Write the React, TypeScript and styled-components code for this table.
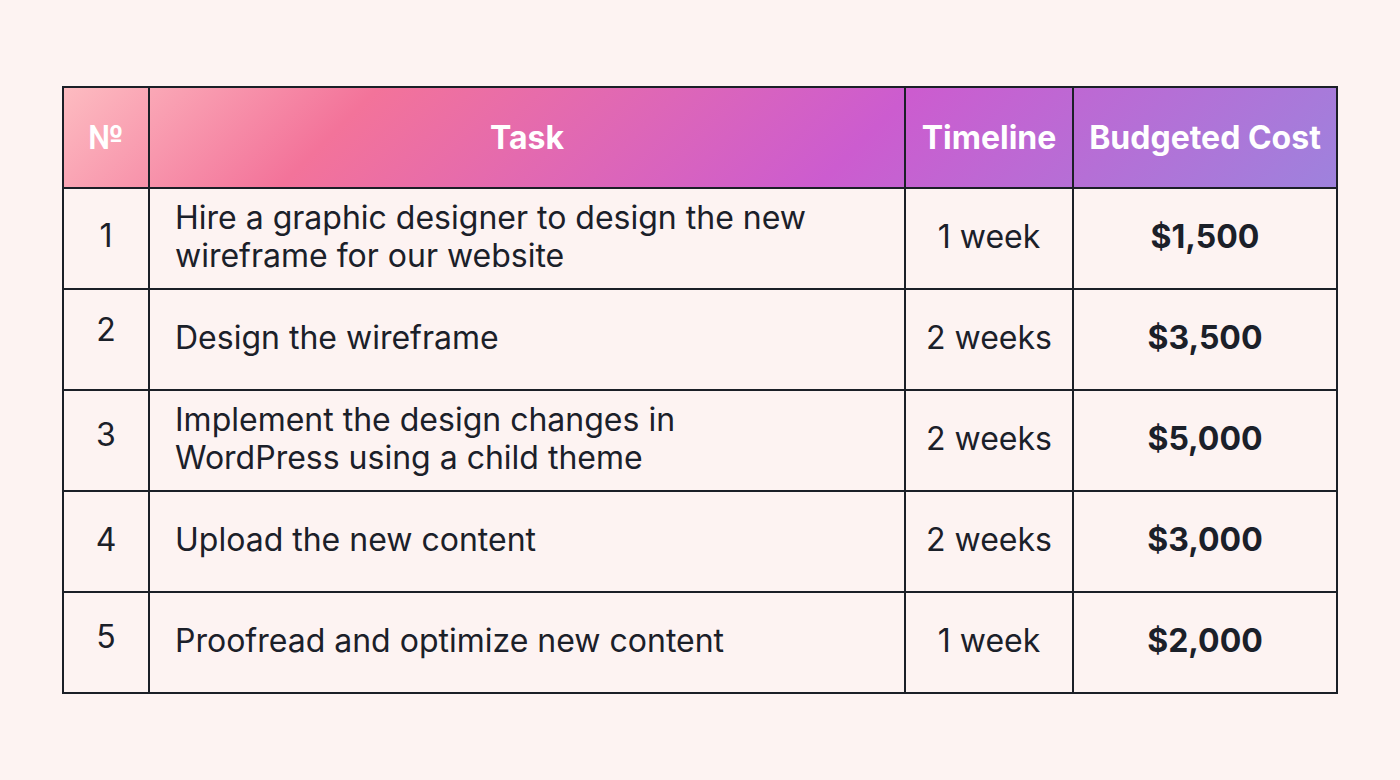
import React from "react";
import styled, { createGlobalStyle } from "styled-components";

const GlobalStyle = createGlobalStyle`
  html, body {
    margin: 0;
    padding: 0;
    background: #fdf3f2;
    font-family: Inter, "Noto Sans", sans-serif;
    color: #1b2029;
  }
`;

const Page = styled.div`
  width: 1400px;
  height: 780px;
  box-sizing: border-box;
  padding: 86px 62px;
`;

const Table = styled.table`
  width: 1276px;
  border-collapse: collapse;
  table-layout: fixed;
  border: 2px solid #1b1f27;
`;

const HeadRow = styled.tr`
  height: 101px;
  background: linear-gradient(
    135deg,
    #fdbcc1 0%,
    #f3739a 23%,
    #cc5ccf 62%,
    #9e82dd 100%
  );
`;

const Row = styled.tr`
  height: 101px;
`;

const Th = styled.th`
  border: 2px solid #1b1f27;
  color: #ffffff;
  font-size: 32px;
  font-weight: 700;
  text-align: center;
  padding: 0;
`;

const Td = styled.td<{ $align?: "left" | "center"; $bold?: boolean }>`
  border: 2px solid #1b1f27;
  font-size: 32px;
  line-height: 38px;
  font-weight: ${(p) => (p.$bold ? 700 : 400)};
  text-align: ${(p) => p.$align ?? "center"};
  padding: ${(p) => (p.$align === "left" ? "0 20px 4px 25px" : "0 0 4px 0")};
  vertical-align: middle;
`;

// the number column sits a few pixels higher in some rows
const NumCell = styled(Td)<{ $lift: number }>`
  padding: 0 0 ${(p) => 4 + p.$lift * 2}px 0;
`;

type Item = { task: React.ReactNode; time: string; cost: string; lift: number };

const items: Item[] = [
  {
    task: (
      <>
        Hire a graphic designer to design the new
        <br />
        wireframe for our website
      </>
    ),
    time: "1 week",
    cost: "$1,500",
    lift: 1,
  },
  { task: "Design the wireframe", time: "2 weeks", cost: "$3,500", lift: 8 },
  {
    task: (
      <>
        Implement the design changes in
        <br />
        WordPress using a child theme
      </>
    ),
    time: "2 weeks",
    cost: "$5,000",
    lift: 3.5,
  },
  { task: "Upload the new content", time: "2 weeks", cost: "$3,000", lift: 0 },
  {
    task: "Proofread and optimize new content",
    time: "1 week",
    cost: "$2,000",
    lift: 3.5,
  },
];

const App = (): JSX.Element => {
  return (
    <Page>
      <GlobalStyle />
      <Table>
        <colgroup>
          <col style={{ width: 86 }} />
          <col style={{ width: 756 }} />
          <col style={{ width: 168 }} />
          <col style={{ width: 264 }} />
        </colgroup>
        <thead>
          <HeadRow>
            <Th>№</Th>
            <Th>Task</Th>
            <Th>Timeline</Th>
            <Th>Budgeted Cost</Th>
          </HeadRow>
        </thead>
        <tbody>
          {items.map((item, i) => (
            <Row key={i}>
              <NumCell $lift={item.lift}>{i + 1}</NumCell>
              <Td $align="left">{item.task}</Td>
              <Td>{item.time}</Td>
              <Td $bold>{item.cost}</Td>
            </Row>
          ))}
        </tbody>
      </Table>
    </Page>
  );
};

export default App;
